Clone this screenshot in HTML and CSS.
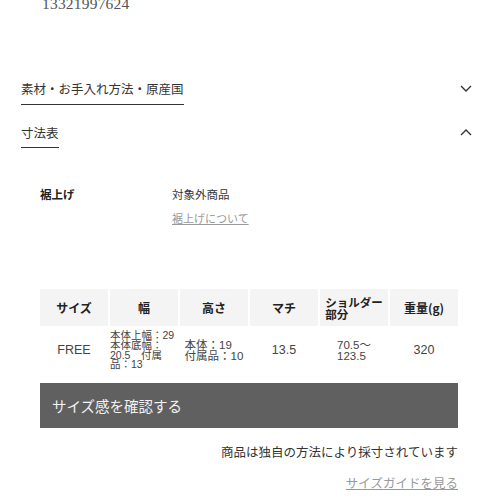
FILE: index.html
```html
<!DOCTYPE html>
<html lang="ja">
<head>
<meta charset="utf-8">
<link rel="stylesheet" href="styles.css">
</head>
<body>
<div class="page">
  <div class="phone">13321997624</div>

  <div class="acc acc-first">
    <span class="acc-title">素材・お手入れ方法・原産国</span>
    <svg class="chev" width="12" height="7" viewBox="0 0 12 7"><polyline points="1,1 6,6 11,1" fill="none" stroke="#333" stroke-width="1.4"/></svg>
  </div>
  <div class="acc acc-second">
    <span class="acc-title">寸法表</span>
    <svg class="chev" width="12" height="7" viewBox="0 0 12 7"><polyline points="1,6 6,1 11,6" fill="none" stroke="#333" stroke-width="1.4"/></svg>
  </div>

  <div class="content">
    <div class="hem">
      <div class="hem-label">裾上げ</div>
      <div class="hem-value">
        <div class="hem-text">対象外商品</div>
        <a class="hem-link">裾上げについて</a>
      </div>
    </div>

    <div class="size-table">
      <div class="th"><span>サイズ</span></div>
      <div class="th"><span>幅</span></div>
      <div class="th"><span>高さ</span></div>
      <div class="th"><span>マチ</span></div>
      <div class="th"><span class="two">ショルダー<br>部分</span></div>
      <div class="th"><span>重量(g)</span></div>
      <div class="td"><span>FREE</span></div>
      <div class="td td-left"><span class="small">本体上幅：29 本体底幅：20.5　付属品：13</span></div>
      <div class="td"><span class="mid">本体：19<br>付属品：10</span></div>
      <div class="td"><span>13.5</span></div>
      <div class="td"><span class="mid">70.5〜<br>123.5</span></div>
      <div class="td"><span>320</span></div>
    </div>

    <div class="size-btn">サイズ感を確認する</div>

    <div class="note">商品は独自の方法により採寸されています</div>
    <div class="guide"><a class="guide-link">サイズガイドを見る</a></div>
  </div>
</div>
</body>
</html>
```
FILE: styles.css
```css
* { box-sizing: border-box; }
html, body { margin: 0; padding: 0; background: #fff; }
body {
  font-family: "Noto Sans CJK JP", "Noto Sans", sans-serif;
  color: #333;
  width: 498px;
  height: 498px;
  overflow: hidden;
}
.page { padding: 0 26px 0 21px; }
.phone {
  font-family: "Liberation Serif", serif;
  font-size: 15.5px;
  line-height: 16px;
  color: #555;
  margin-top: -4px;
  padding-left: 21px;
  letter-spacing: 0.2px;
}
.acc {
  display: flex;
  justify-content: space-between;
  align-items: flex-start;
}
.acc-first { margin-top: 68px; }
.acc-second { margin-top: 19px; }
.acc-title {
  font-size: 12.5px;
  line-height: 18px;
  color: #333;
  padding-bottom: 5.5px;
  border-bottom: 1.5px solid #333;
}
.chev { margin-top: 5px; }
.content { padding: 0 14px 0 19px; }
.hem {
  display: flex;
  margin-top: 37px;
  font-size: 11.5px;
  line-height: 18px;
}
.hem-label { width: 132px; font-weight: bold; color: #222; }
.hem-text { color: #333; }
.hem-link {
  display: inline-block;
  margin-top: 6px;
  font-size: 11px;
  color: #999;
  text-decoration: underline;
}
.size-table {
  margin-top: 62px;
  display: grid;
  grid-template-columns: repeat(6, 1fr);
  grid-template-rows: 37px 44px;
  gap: 2px;
}
.th {
  background: #f4f4f4;
  display: flex;
  align-items: center;
  justify-content: center;
  font-size: 12px;
  font-weight: bold;
  line-height: 12px;
  color: #222;
  text-align: left;
}
.two { font-size: 11.5px; line-height: 12px; }
.td {
  display: flex;
  align-items: center;
  justify-content: center;
  font-family: "Liberation Sans", "Noto Sans CJK JP", sans-serif;
  font-size: 12.5px;
  line-height: 11px;
  color: #444;
  text-align: left;
}
.td-left { justify-content: flex-start; }
.small {
  font-size: 10.5px;
  line-height: 9.8px;
  display: block;
  width: 66px;
  padding-top: 1px;
}
.mid { font-size: 11.5px; line-height: 11px; padding-top: 2px; }
.size-btn {
  margin-top: 11px;
  height: 45px;
  background: #606060;
  color: #f2f2f2;
  font-size: 14.5px;
  line-height: 45px;
  padding-left: 12px;
}
.note {
  margin-top: 15px;
  text-align: right;
  font-size: 12.5px;
  line-height: 18px;
  color: #333;
}
.guide {
  margin-top: 13px;
  text-align: right;
  font-size: 12.5px;
  line-height: 18px;
}
.guide-link { color: #999; text-decoration: underline; }
```
